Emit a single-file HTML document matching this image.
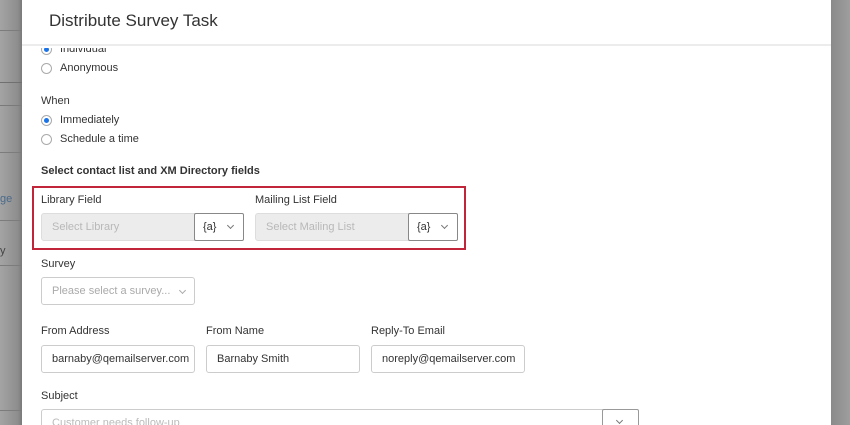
<!DOCTYPE html>
<html style="overflow:hidden;height:425px"><head><meta charset="utf-8"><style>
*{box-sizing:border-box;margin:0;padding:0}
body{width:850px;height:425px;overflow:hidden;background:#8a8a8a;font-family:"Liberation Sans",sans-serif;position:relative;font-size:11px;color:#333}
.side{position:absolute;top:0;height:425px;background:linear-gradient(90deg,#a4a4a4,#8e8e8e 80%,#7a7a7a)}
.hl{position:absolute;left:0;height:1px;background:#7c7c7c;width:22px}
.modal{position:absolute;left:22px;top:0;width:809px;height:425px;background:#fff;overflow:hidden}
.hdr{position:absolute;left:0;top:0;width:100%;height:46px;border-bottom:2px solid #ececec}
.hdr h1{position:absolute;left:27px;top:11px;font-size:17px;font-weight:normal;color:#333}
.t{position:absolute;white-space:nowrap}
.radio{position:absolute;width:11px;height:11px;border:1px solid #aaa;border-radius:50%;background:#fff}
.radio.on::after{content:"";position:absolute;left:2px;top:2px;width:5px;height:5px;border-radius:50%;background:#1a73e8}
.b{font-weight:bold}
.inp{position:absolute;height:28px;border:1px solid #ccc;border-radius:3px;background:#fff;padding:0 10px;line-height:27px;font-size:11px;white-space:nowrap;overflow:hidden}
.dis{background:#ececec;border-color:#ddd;color:#b8b8b8}
.btn{position:absolute;height:28px;border:1px solid #888;border-radius:2px;background:#fff;font-size:11px;line-height:26px;padding-left:8px}
.chev{position:absolute;width:5px;height:5px;border-right:1px solid #777;border-bottom:1px solid #777;transform:rotate(45deg)}
</style></head><body>
<div class="side" style="left:0;width:22px"></div>
<div class="hl" style="top:30px"></div><div class="hl" style="top:82px;background:#707070"></div><div class="hl" style="top:105px;background:#7a7a7a"></div>
<div class="hl" style="top:152px"></div><div class="hl" style="top:220px"></div><div class="hl" style="top:265px"></div><div class="hl" style="top:410px"></div>
<div class="t" style="left:0;top:193px;color:#4a6a8a;font-size:11px">ge</div>
<div class="t" style="left:0;top:245px;color:#444;font-size:11px">y</div>
<div class="side" style="left:831px;width:19px;background:linear-gradient(90deg,#8a8a8a,#9e9e9e)"></div>
<div class="modal">
 <div class="hdr"><h1>Distribute Survey Task</h1></div>
 <div class="radio on" style="left:19px;top:44px;clip-path:inset(4px 0 0 0)"></div>
 <div class="t" style="left:38px;top:43px;clip-path:inset(5px 0 0 0)">Individual</div>
 <div class="radio" style="left:19px;top:63px"></div><div class="t" style="left:38px;top:62px">Anonymous</div>
 <div class="t" style="left:19px;top:95px">When</div>
 <div class="radio on" style="left:19px;top:115px"></div><div class="t" style="left:38px;top:114px">Immediately</div>
 <div class="radio" style="left:19px;top:134px"></div><div class="t" style="left:38px;top:133px">Schedule a time</div>
 <div class="t b" style="left:19px;top:165px">Select contact list and XM Directory fields</div>
 <div style="position:absolute;left:10px;top:186px;width:434px;height:64px;border:2px solid #c0253a"></div>
 <div class="t" style="left:19px;top:194px">Library Field</div>
 <div class="t" style="left:233px;top:194px">Mailing List Field</div>
 <div class="inp dis" style="left:19px;top:213px;width:180px">Select Library</div>
 <div class="btn" style="left:172px;top:213px;width:50px">{a}<div class="chev" style="left:33px;top:9px"></div></div>
 <div class="inp dis" style="left:233px;top:213px;width:180px">Select Mailing List</div>
 <div class="btn" style="left:386px;top:213px;width:50px">{a}<div class="chev" style="left:33px;top:9px"></div></div>
 <div class="t" style="left:19px;top:258px">Survey</div>
 <div class="inp" style="left:19px;top:277px;width:154px;color:#aaa">Please select a survey...<div class="chev" style="left:138px;top:10px;border-color:#aaa"></div></div>
 <div class="t" style="left:19px;top:325px">From Address</div>
 <div class="t" style="left:184px;top:325px">From Name</div>
 <div class="t" style="left:349px;top:325px">Reply-To Email</div>
 <div class="inp" style="left:19px;top:345px;width:154px;padding-right:0">barnaby@qemailserver.com</div>
 <div class="inp" style="left:184px;top:345px;width:154px">Barnaby Smith</div>
 <div class="inp" style="left:349px;top:345px;width:154px">noreply@qemailserver.com</div>
 <div class="t" style="left:19px;top:390px">Subject</div>
 <div class="inp" style="left:19px;top:409px;width:598px;height:30px;color:#bbb">Customer needs follow-up</div>
 <div class="btn" style="left:580px;top:409px;width:37px;height:30px;border-color:#999"><div class="chev" style="left:14px;top:8px"></div></div>
</div>
</body></html>
